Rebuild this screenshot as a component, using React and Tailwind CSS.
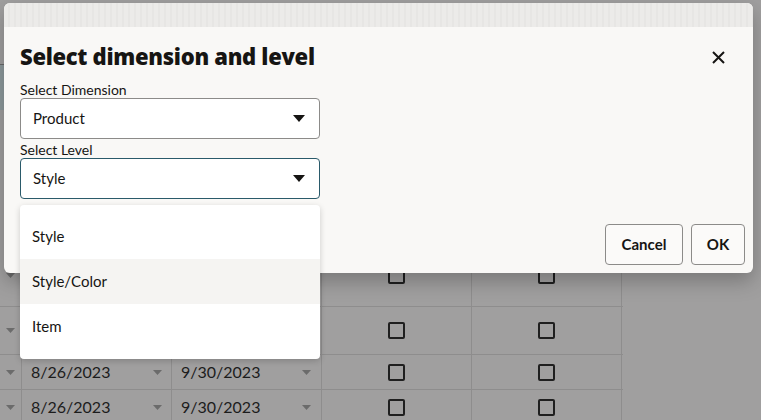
import React from 'react';

const font = { fontFamily: 'Lato, "Noto Sans", sans-serif' };

// small caret used in the selects
const Caret = ({ className = '' }) => (
  <svg width="12" height="7" viewBox="0 0 12 7" className={className}>
    <path d="M0 0 L12 0 L6 7 Z" fill="currentColor" />
  </svg>
);

const SmallCaret = () => (
  <svg width="9" height="5" viewBox="0 0 9 5" className="text-[#6b6b6b]">
    <path d="M0 0 L9 0 L4.5 5 Z" fill="currentColor" />
  </svg>
);

const Check = () => (
  <div className="w-[17px] h-[17px] border-2 border-[#1f1f1f] rounded-[2px]" />
);

const rows = [
  { h: 'h-[62px]', from: '', to: '' },
  { h: 'h-[48px]', from: '', to: '' },
  { h: 'h-[35px]', from: '8/26/2023', to: '9/30/2023' },
  { h: 'h-[35px]', from: '8/26/2023', to: '9/30/2023' },
];

function Grid() {
  return (
    <div className="flex flex-col pt-[245px]">
      {rows.map((r, i) => (
        <div key={i} className={`flex ${r.h} w-[623px] border-b border-[#8e8d8d]`}>
          <div className="w-[22px] shrink-0 flex items-center justify-center border-r border-[#8e8d8d]">
            <SmallCaret />
          </div>
          <div className="w-[150px] shrink-0 flex items-center justify-between pl-[9px] pr-[9px] border-r border-[#8e8d8d]">
            <span className="text-[16px] text-[#1c1c1c]">{r.from}</span>
            <SmallCaret />
          </div>
          <div className="w-[150px] shrink-0 flex items-center justify-between pl-[9px] pr-[10px] border-r border-[#8e8d8d]">
            <span className="text-[16px] text-[#1c1c1c]">{r.to}</span>
            <SmallCaret />
          </div>
          <div className="w-[150px] shrink-0 flex items-center justify-center border-r border-[#8e8d8d]">
            <Check />
          </div>
          <div className="w-[150px] shrink-0 flex items-center justify-center border-r border-[#8e8d8d]">
            <Check />
          </div>
        </div>
      ))}
    </div>
  );
}

function Select({ value, focused }) {
  return (
    <div
      className={`w-[300px] h-[41px] bg-white rounded-[4px] border flex items-center justify-between pl-[12px] pr-[14px] ${
        focused ? 'border-[#2a5a6a]' : 'border-[#8c8b89]'
      }`}
    >
      <span className="text-[15px] text-[#161513]">{value}</span>
      <Caret className="text-[#161513]" />
    </div>
  );
}

export default function App() {
  return (
    <div className="relative w-[761px] h-[420px] bg-[#a09f9f] overflow-hidden" style={font}>
      <div className="absolute left-0 top-[64px] w-[4px] h-[46px] bg-[#8e9a9d] border-t border-[#6a6a6a]" />
      <Grid />

      {/* Dialog */}
      <div className="absolute left-[4px] top-[3px] w-[749px] h-[270px] rounded-[6px] bg-[#f9f8f6] shadow-[0_8px_20px_rgba(0,0,0,0.25)]">
        <div className="h-[24px] rounded-t-[6px] bg-[repeating-linear-gradient(90deg,#ecebe9_0px,#ecebe9_4px,#e7e6e4_4px,#e7e6e4_6px)]" />
        <div className="relative px-4">
          <div className="flex items-start justify-between pt-[15px]">
            <h1 className="text-[22px] leading-[28px] font-extrabold text-[#161513] tracking-[-0.3px]" style={{ fontFamily: '"Open Sans", sans-serif' }}>
              Select dimension and level
            </h1>
            <button className="mt-[9px] mr-[12px] text-[#161513]">
              <svg width="13" height="13" viewBox="0 0 13 13">
                <path d="M1 1 L12 12 M12 1 L1 12" stroke="currentColor" strokeWidth="2" />
              </svg>
            </button>
          </div>
          <div className="mt-[11px] text-[14px] leading-[17px] text-[#161513]">Select Dimension</div>
          <Select value="Product" />
          <div className="mt-[3px] text-[14px] leading-[16px] text-[#161513]">Select Level</div>
          <Select value="Style" focused />

          <div className="flex justify-end gap-2 mt-[25px] mr-[-8px]">
            <button className="w-[78px] h-[41px] rounded-[4px] border border-[#8c8b89] bg-[#fbfaf9] text-[15px] font-bold text-[#161513]">
              Cancel
            </button>
            <button className="w-[54px] h-[41px] rounded-[4px] border border-[#8c8b89] bg-[#fbfaf9] text-[15px] font-bold text-[#161513]">
              OK
            </button>
          </div>

          {/* Dropdown list */}
          <div className="absolute left-4 top-[178px] w-[300px] h-[154px] bg-white rounded-[4px] shadow-[0_2px_6px_rgba(0,0,0,0.18)] py-[9px]">
            {['Style', 'Style/Color', 'Item'].map((o, i) => (
              <div
                key={o}
                className={`h-[45px] flex items-center pl-[12px] text-[15px] text-[#161513] ${
                  i === 1 ? 'bg-[#f5f4f2]' : ''
                }`}
              >
                {o}
              </div>
            ))}
          </div>
        </div>
      </div>
    </div>
  );
}
